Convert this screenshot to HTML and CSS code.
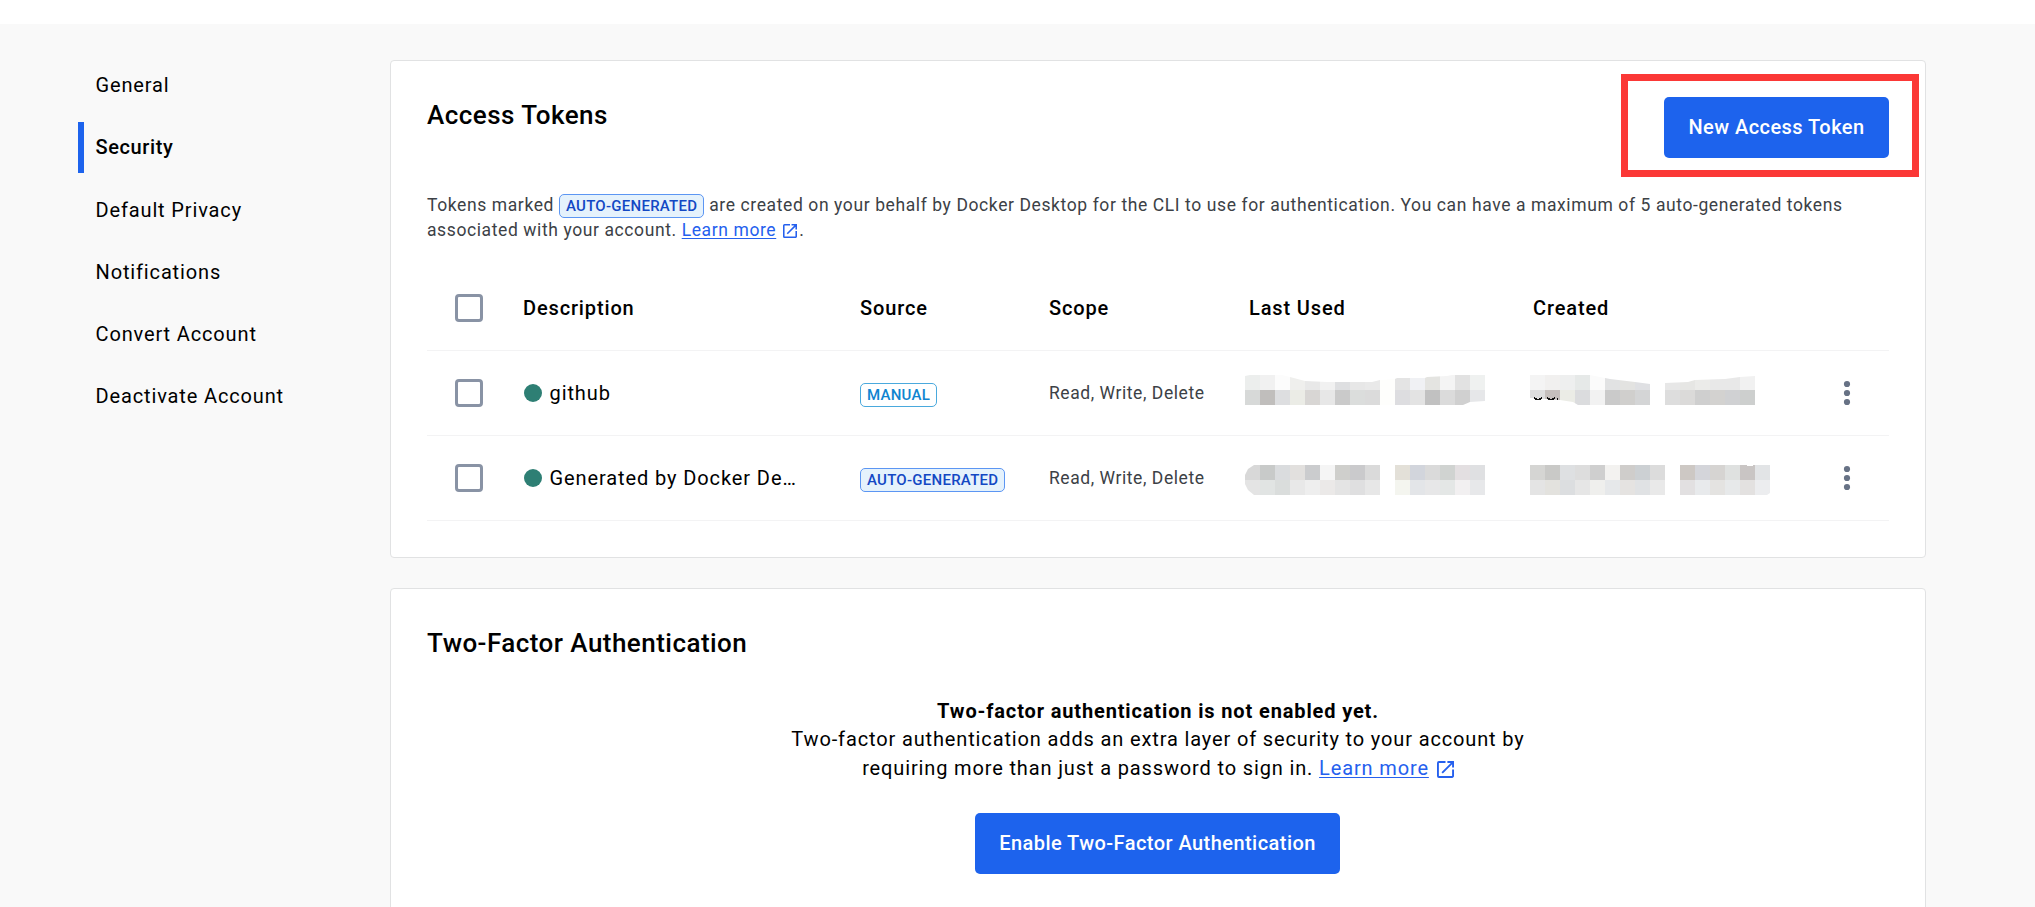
FILE: index.html
```html
<!DOCTYPE html>
<html lang="en">
<head>
<meta charset="utf-8">
<title>Security</title>
<link rel="stylesheet" href="styles.css">
</head>
<body>
<svg class="defs" width="0" height="0" aria-hidden="true">
  <symbol id="external" viewBox="0 0 18 18">
    <path fill="currentColor" d="M16 16H2V2h7V0H2a2 2 0 0 0-2 2v14a2 2 0 0 0 2 2h14c1.100 0 2-.9 2-2V9h-2v7zM11 0v2h3.590l-9.830 9.830 1.410 1.410L16 3.410V7h2V0h-7z"/>
  </symbol>
  <symbol id="more" viewBox="0 0 8 26">
    <g fill="currentColor"><circle cx="4" cy="4" r="3.100"/><circle cx="4" cy="13" r="3.100"/><circle cx="4" cy="22" r="3.100"/></g>
  </symbol>
</svg>
<header class="topbar"></header>
<div class="layout">
  <nav class="nav">
    <a class="nav-item">General</a>
    <a class="nav-item active">Security</a>
    <a class="nav-item">Default Privacy</a>
    <a class="nav-item">Notifications</a>
    <a class="nav-item">Convert Account</a>
    <a class="nav-item">Deactivate Account</a>
  </nav>
  <main class="content">
    <section class="card tokens">
      <div class="card-head">
        <h2 class="title">Access Tokens</h2>
        <div class="action"><button class="btn btn-new">New Access Token</button><span class="highlight"></span></div>
      </div>
      <p class="note">Tokens marked <span class="badge auto">AUTO-GENERATED</span> are created on your behalf by Docker Desktop for the CLI to use for authentication. You can have a maximum of 5 auto-generated tokens<br>associated with your account. <a class="link">Learn more</a><svg class="ext small"><use href="#external"/></svg>.</p>
      <div class="table">
        <div class="row head">
          <span class="check"></span><span>Description</span><span>Source</span><span>Scope</span><span>Last Used</span><span>Created</span><span></span>
        </div>
        <div class="row">
          <span class="check"></span>
          <span class="desc"><i class="dot"></i>github</span>
          <span class="source"><span class="badge manual">MANUAL</span></span>
          <span class="scope">Read, Write, Delete</span>
          <svg class="mosaic" viewBox="0 0 240 30" shape-rendering="crispEdges">
            <clipPath id="c1"><path d="M0 1L5 0H37L45 2L60 6L82 7H127L135 5L150 4L152 3H180L182 2L202 1L207 0H240V26L225 27L218 30H0Z"/></clipPath>
            <g clip-path="url(#c1)" data-cells="eceeed f1f1f1 fcfcfc efefed e8e8e8 f1f1f1 dedfe1 e7e7e7 e9e9e9 fefefc e4e4e4 f0f1f4 e4e4e1 f4f4f4 e2e2e2 eff1f0 d7d9d8 c0bebc dddee0 ebece6 d8d6d4 e7e7e7 cacaca dbdddc dbdbdb fefefc dddde0 e3e3e3 c1c1c1 dbdbdb d0d0d0 e6e7e9"></g>
          </svg>
          <svg class="mosaic" viewBox="0 0 240 30" shape-rendering="crispEdges">
            <clipPath id="c2"><path d="M0 0H60L80 4L105 7L120 9H135V8L158 7L165 5L195 4L210 2L225 1V30H48L43 27L30 25L0 23Z"/></clipPath>
            <g clip-path="url(#c2)" data-cells="f4f4f4 f1f0ef eeefef e6e9e8 fbfbfb e1e2e3 e3e3e1 dfe0e3 - e7e7e7 e6e6e4 ebebe9 e8e8e8 e8e8e8 f1f1f1 - dededf c5bfbd ebece6 dbdcde f2f2f2 cacaca d0cfcd d4d5d6 - dddddd dbdad9 cfcfcf d3d2d0 d0d1d3 cdcfce -"></g>
            <path class="ink" d="M4 23Q8 26 12 23M17 23Q21 26 25 23M27 24H28"/>
          </svg>
          <svg class="more"><use href="#more"/></svg>
        </div>
        <div class="row">
          <span class="check"></span>
          <span class="desc"><i class="dot"></i>Generated by Docker De…</span>
          <span class="source"><span class="badge auto">AUTO-GENERATED</span></span>
          <span class="scope">Read, Write, Delete</span>
          <svg class="mosaic lower" viewBox="0 0 240 30" shape-rendering="crispEdges">
            <clipPath id="c3"><path d="M9 0H240V30H9L3 25L0 19V10L3 4Z"/></clipPath>
            <g clip-path="url(#c3)" data-cells="d8d8d8 c8cac9 dadcde e2e0de cbccce f5f5f5 cfcfcc cacacc dadada - e3e0d8 d2d5dc dadada d0d3d1 e3dfe1 dfe0e2 e4e4e4 e1e4e3 dadddc e8e8e8 eeeeee ebe9e8 e4e4e4 dfdfe0 e7e7e7 - f4f5ef e3e5e8 e7e7e8 e4e7e6 f2f0f1 e7e8ea"></g>
          </svg>
          <svg class="mosaic lower" viewBox="0 0 240 30" shape-rendering="crispEdges">
            <clipPath id="c4"><path d="M0 0H217V1H223V0H240V28L237 30H0Z"/></clipPath>
            <g clip-path="url(#c4)" data-cells="d5d5d3 c9c9c7 dee0e2 dddddd cfcfcf f3f2f0 cfcdcb ccd0d3 dcdcdc - cdc8c4 d4d5da d6d4d2 dfe1e0 c9c5c4 e2e4e6 e4e4e4 e3e2de dcdee0 e6e6e6 efefed e6e8ea e5e3e1 e0e2e4 e9e9e9 - e2e0e1 e8eaec e4e3e1 e7e9ea e3e1e0 ecedef"></g>
          </svg>
          <svg class="more"><use href="#more"/></svg>
        </div>
      </div>
    </section>
    <section class="card twofactor">
      <h2 class="title">Two-Factor Authentication</h2>
      <div class="tf-body">
        <strong>Two-factor authentication is not enabled yet.</strong>
        <p class="tf-text">Two-factor authentication adds an extra layer of security to your account by<br>requiring more than just a password to sign in. <a class="link">Learn more</a><svg class="ext"><use href="#external"/></svg></p>
        <button class="btn btn-enable">Enable Two-Factor Authentication</button>
      </div>
    </section>
  </main>
</div>
<script src="mosaic.js"></script>
</body>
</html>
```
FILE: styles.css
```css
* { box-sizing: border-box; }
body {
  margin: 0;
  height: 907px;
  overflow: hidden;
  background: #f9f9f9;
  color: #000;
  font: 400 20px/28px Roboto, sans-serif;
  letter-spacing: 0.860px;
}
.defs { position: absolute; }
.topbar { height: 24px; background: #fff; }
.layout { display: flex; align-items: flex-start; padding-top: 36px; }
.nav { display: flex; flex-direction: column; gap: 11.300px; width: 312px; margin-left: 78px; }
.nav-item { height: 51px; padding-left: 11.500px; border-left: 6px solid transparent; line-height: 51px; }
.nav-item.active { border-color: #1d63ed; font-weight: 500; letter-spacing: 0.6px; }
.content { display: flex; flex-direction: column; gap: 30px; width: 1536px; }
.card { background: #fff; border: 1px solid #e1e2e3; border-radius: 4px; padding: 0 36px; }
.tokens { height: 498px; }
.twofactor { height: 360px; padding-top: 36px; }
.card-head { display: flex; justify-content: space-between; align-items: flex-start; padding-top: 36px; }
.title { margin: 0; font-size: 26px; font-weight: 500; line-height: 36px; letter-spacing: 0.460px; }
.action { position: relative; }
.highlight { position: absolute; left: -43px; top: -23px; width: 298px; height: 103px; border: 7px solid #fb3836; }
.btn { display: block; height: 61px; padding: 0; border: 0; border-radius: 5px; background: #1d63ed; color: #fff; font: 500 20px/61px Roboto, sans-serif; letter-spacing: 0.450px; }
.btn-new { width: 225px; }
.btn-enable { width: 365px; margin: 31px 1px 0 0; }
.note { margin: 35px 0 0; color: #3c4146; font-size: 17.500px; line-height: 25px; letter-spacing: 0.6px; white-space: nowrap; }
.badge { display: inline-block; height: 24px; padding: 0 6px; border: 1px solid; border-radius: 5px; font-size: 15px; font-weight: 500; line-height: 23px; letter-spacing: 0.260px; vertical-align: top; }
.note .badge { margin: 1px 0 -1px; }
.auto { background: #e5f2fc; border-color: #5c96f3; color: #1348c4; }
.manual { background: #fff; border-color: #4aa9dd; color: #0f84d0; }
.link { color: #2560ee; text-decoration: underline; text-decoration-thickness: 1px; text-underline-offset: 2px; }
.ext { width: 17px; height: 17px; margin-left: 8px; color: #2560ee; vertical-align: -3px; }
.ext.small { width: 14px; height: 14px; margin: 0 2px 0 7px; vertical-align: -2px; }
.table { margin-top: 23px; }
.row { display: grid; grid-template-columns: 96px 337px 189px 196px 285px 313px 1fr; align-items: center; height: 85px; border-bottom: 1px solid #f3f3f4; }
.head { font-weight: 500; letter-spacing: 0.860px; }
.head > :nth-child(5) { padding-left: 4px; }
.head > :nth-child(6) { padding-left: 3px; }
.check { width: 28px; height: 28px; margin-left: 28px; border: 3px solid #8993a5; border-radius: 4px; }
.desc { display: flex; align-items: center; gap: 8px; padding-left: 0.500px; letter-spacing: 0.9px; }
.dot { width: 18px; height: 18px; border-radius: 50%; background: #2e7f74; }
.source { display: flex; padding-top: 3px; }
.scope { color: #3c4146; font-size: 17.500px; letter-spacing: 0.560px; }
.mosaic { display: block; width: 240px; height: 30px; margin-top: -6px; }
.mosaic.lower { margin-top: 4px; }
.ink { fill: none; stroke: #111; stroke-width: 1.500; }
.more { width: 8px; height: 26px; color: #677285; }
.tf-body { display: flex; flex-direction: column; align-items: center; margin-top: 36px; text-align: center; }
.tf-body strong { font-weight: 700; line-height: 28px; }
.tf-text { margin: 0; line-height: 28.500px; white-space: nowrap; }
```
FILE: mosaic.js
```js
// Paints each redacted date as two rows of sixteen 15px tiles.
document.querySelectorAll('[data-cells]').forEach(function (group) {
  group.dataset.cells.split(' ').forEach(function (color, i) {
    if (color === '-') return;
    var r = document.createElementNS('http://www.w3.org/2000/svg', 'rect');
    r.setAttribute('x', (i % 16) * 15);
    r.setAttribute('y', Math.floor(i / 16) * 15);
    r.setAttribute('width', 15);
    r.setAttribute('height', 15);
    r.setAttribute('fill', '#' + color);
    group.appendChild(r);
  });
});
```
